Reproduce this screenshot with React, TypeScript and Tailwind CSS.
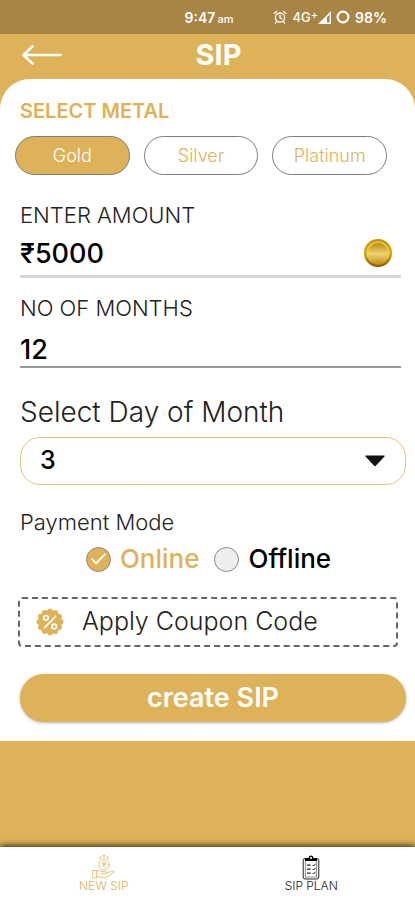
import React, { useState } from 'react';

const metals = ["Gold", "Silver", "Platinum"]
const modes = ["Online", "Offline"]

const StatusBar = () => {
    return (
        <div className="h-[34px] bg-[#A88445] text-white flex items-center justify-end gap-[40px] pr-[28px]">
            <p className="flex items-baseline gap-[2px] text-[14px] font-semibold">9:47<span className="text-[11px] font-medium">am</span></p>
            <div className="flex items-center gap-[5px]">
                <svg width="14" height="14" viewBox="0 0 14 14" fill="none" stroke="currentColor" strokeWidth="1.3" strokeLinecap="round">
                    <circle cx="7" cy="7.6" r="4.6" />
                    <path d="M1.2 3.4 3.6 1.4M12.8 3.4 10.4 1.4M7 5v2.8l1.8 1M3.6 11.6 2.6 13M10.4 11.6l1 1.4" />
                </svg>
                <div className="flex items-center">
                    <span className="flex items-start text-[13px] leading-[16px] font-medium">4G<span className="text-[11px] leading-[12px]">+</span></span>
                    <svg width="13" height="13" viewBox="0 0 13 13" fill="currentColor">
                        <path fillRule="evenodd" d="M13 0v13H0zM11.6 3.6 9 6.2v5.4h2.6z" />
                    </svg>
                </div>
                <svg width="14" height="14" viewBox="0 0 14 14" fill="none" stroke="currentColor" strokeWidth="2.2">
                    <circle cx="7" cy="7" r="5.4" />
                </svg>
                <span className="text-[14px] font-semibold">98%</span>
            </div>
        </div>
    )
}

const Coin = () => {
    return (
        <svg width="30" height="30" viewBox="0 0 30 30">
            <defs>
                <linearGradient id="coinRim" x1="0" y1="0" x2="0" y2="1">
                    <stop offset="0" stopColor="#C2940F" />
                    <stop offset="0.5" stopColor="#D3A51A" />
                    <stop offset="1" stopColor="#8A560A" />
                </linearGradient>
                <linearGradient id="coinRing" x1="0" y1="0" x2="0" y2="1">
                    <stop offset="0" stopColor="#E6C22A" />
                    <stop offset="0.6" stopColor="#EFD23C" />
                    <stop offset="1" stopColor="#C08C12" />
                </linearGradient>
                <linearGradient id="coinFace" x1="0" y1="0" x2="0" y2="1">
                    <stop offset="0" stopColor="#B98A10" />
                    <stop offset="0.55" stopColor="#EFD374" />
                    <stop offset="1" stopColor="#C9961A" />
                </linearGradient>
            </defs>
            <circle cx="15" cy="15" r="14" fill="url(#coinRim)" />
            <circle cx="15" cy="15" r="11.8" fill="url(#coinRing)" />
            <circle cx="15" cy="15" r="10" fill="url(#coinFace)" />
        </svg>
    )
}

const CouponBadge = () => {
    return (
        <svg width="28" height="28" viewBox="0 0 28 28">
            <g fill="#DEB258">
                <circle cx="14" cy="14" r="12" />
                <circle cx="14" cy="2.8" r="2.4" />
                <circle cx="19.6" cy="4.3" r="2.4" />
                <circle cx="23.7" cy="8.4" r="2.4" />
                <circle cx="25.2" cy="14" r="2.4" />
                <circle cx="23.7" cy="19.6" r="2.4" />
                <circle cx="19.6" cy="23.7" r="2.4" />
                <circle cx="14" cy="25.2" r="2.4" />
                <circle cx="8.4" cy="23.7" r="2.4" />
                <circle cx="4.3" cy="19.6" r="2.4" />
                <circle cx="2.8" cy="14" r="2.4" />
                <circle cx="4.3" cy="8.4" r="2.4" />
                <circle cx="8.4" cy="4.3" r="2.4" />
            </g>
            <g fill="none" stroke="#fff" strokeWidth="1.6" strokeLinecap="round">
                <path d="M19.6 8.4 8.6 19.6" />
                <circle cx="10" cy="9.8" r="2.3" />
                <circle cx="18.2" cy="18.4" r="2.3" />
            </g>
        </svg>
    )
}

const HandCoinIcon = () => {
    return (
        <svg width="24" height="26" viewBox="0 0 24 26" fill="none" stroke="currentColor" strokeWidth="0.8" strokeLinecap="round" strokeLinejoin="round">
            <circle cx="12" cy="11" r="5" />
            <path d="M10.6 8.8h3M10.6 10.2h3M11 8.8c2.4 0 2.4 2.6 0 2.6l2 2.2" />
            <path d="M12 1v4M10.8 2.2 12 1l1.2 1.2M8.4 3v2M7.6 3.8l.8-.8.8.8M15.6 3v2M14.8 3.8l.8-.8.8.8" />
            <path d="M1 16.5h3.4v7.5H1zM4.4 17.5c2-1.3 4-1 5.4.2h3.6c1.6 0 1.6 2 0 2H9.8M14.6 19.2l5.6-2.2c1.8-.5 2.4 1 1 1.9l-6.4 4.1c-1 .5-2 .6-3 .4l-7.4-.6" />
        </svg>
    )
}

const ClipboardIcon = () => {
    return (
        <svg width="18" height="26" viewBox="0 0 18 26" fill="none" stroke="currentColor">
            <rect x="1.2" y="4.5" width="15.6" height="20.5" rx="2" strokeWidth="1" />
            <rect x="3.2" y="6.5" width="11.6" height="16.5" strokeWidth="0.5" />
            <path d="M3 4h3.6a2.4 2.4 0 0 1 4.8 0H15v3H3z" fill="#000" stroke="none" />
            <circle cx="9" cy="4" r="1.1" fill="#fff" stroke="none" />
            <path d="M5 11.2h3.6M5 15.2h3.6M5 19.2h3.6" strokeWidth="1.3" />
            <path d="m10.6 11 1 1 1.8-2.2M10.6 15l1 1 1.8-2.2M10.6 19l1 1 1.8-2.2" strokeWidth="1" />
        </svg>
    )
}

const App = () => {
    const [metal, setMetal] = useState("Gold")
    const [mode, setMode] = useState("Online")

    return (
        <div className="min-h-screen flex flex-col bg-[#DEB258] font-['Inter',sans-serif] text-black">
            <StatusBar />
            <header className="h-[45px] grid grid-cols-[60px_1fr_38px] items-center px-[10px] pb-[4px] text-white">
                <button type="button" aria-label="Back" className="pl-[12px]">
                    <svg width="40" height="20" viewBox="0 0 40 20" fill="none" stroke="currentColor" strokeWidth="2.6" strokeLinecap="round" strokeLinejoin="round">
                        <path d="M10.5 1.5 1.5 10l9 8.5M2 10h36.5" />
                    </svg>
                </button>
                <h1 className="text-center text-[29px] leading-[32px] font-bold">SIP</h1>
            </header>

            <main className="bg-white rounded-t-[30px] pl-[20px] pr-[14px] pt-[20px] pb-[19px]">
                <h2 className="text-[#DEB258] text-[20px] leading-[24px] font-semibold">SELECT METAL</h2>
                <div className="flex gap-[14px] mt-[13px] -ml-[5px] mr-[14px]">
                    {metals.map((item) => (
                        <button
                            key={item}
                            type="button"
                            onClick={() => setMetal(item)}
                            className={`flex-1 h-[39px] rounded-full border border-[#7D7D7D] text-[18px] font-light ${metal === item ? "bg-[#DEB258] text-white" : "bg-white text-[#DEB258]"}`}
                        >
                            {item}
                        </button>
                    ))}
                </div>

                <div className="mt-[28px]">
                    <label htmlFor="amount" className="block text-[22px] leading-[24px] font-light text-[#222222]">ENTER AMOUNT</label>
                    <div className="flex items-end h-[51px] pb-[7px] border-b-[3px] border-[#D5D5D5] pr-[8px]">
                        <input id="amount" defaultValue="₹5000" className="flex-1 min-w-0 h-[28px] text-[27px] leading-[28px] font-medium outline-none" />
                        <Coin />
                    </div>
                </div>

                <div className="mt-[18px]">
                    <label htmlFor="months" className="block text-[22px] leading-[24px] font-light text-[#222222]">NO OF MONTHS</label>
                    <input id="months" defaultValue="12" className="block w-full h-[48px] pt-[12px] text-[27px] leading-[32px] font-medium border-b-2 border-[#9A9A9A] outline-none" />
                </div>

                <div className="mt-[28px] -mr-[5px]">
                    <label htmlFor="day" className="block text-[28px] leading-[32px] font-light text-[#222222]">Select Day of Month</label>
                    <div className="relative mt-[9px]">
                        <select id="day" defaultValue="3" className="appearance-none w-full h-[48px] rounded-[20px] border border-[#E4C27A] bg-white pl-[19px] text-[25px] font-medium outline-none">
                            <option>1</option>
                            <option>2</option>
                            <option>3</option>
                            <option>4</option>
                            <option>5</option>
                        </select>
                        <svg className="absolute right-[20px] top-[18px] pointer-events-none" width="22" height="12" viewBox="0 0 22 12" fill="#111">
                            <path d="M2 .5h18q1.4 0 .5 1l-8.7 9.3q-.8.9-1.6 0L1.500 1.500q-.9-1 .5-1z" />
                        </svg>
                    </div>
                </div>

                <fieldset className="mt-[25px]">
                    <legend className="text-[22px] leading-[24px] font-light text-[#222222]">Payment Mode</legend>
                    <div className="flex justify-center gap-[15px] mt-[9px] pr-[4px]">
                        {modes.map((item) => (
                            <label key={item} className={`relative flex items-center gap-[9px] text-[26px] leading-[32px] font-medium ${mode === item ? "text-[#DEB258]" : "text-black"}`}>
                                <input
                                    type="radio"
                                    name="mode"
                                    checked={mode === item}
                                    onChange={() => setMode(item)}
                                    className="appearance-none w-[25px] h-[25px] rounded-full border border-[#8A8A8A] bg-[#EEEEEE] checked:bg-[#DEB258]"
                                />
                                {mode === item && (
                                    <svg className="absolute left-[5px] top-[10px]" width="15" height="12" viewBox="0 0 15 12" fill="none" stroke="#fff" strokeWidth="1.8" strokeLinecap="round" strokeLinejoin="round">
                                        <path d="m1 6 4 4.5L14 1.2" />
                                    </svg>
                                )}
                                {item}
                            </label>
                        ))}
                    </div>
                </fieldset>

                <div className="mt-[22px] -ml-[2px] mr-[3px]">
                    <button type="button" className="flex items-center gap-[18px] w-full h-[50px] px-[16px] border-2 border-dashed border-[#666666] rounded-[4px] text-[25px] font-light text-[#222222]">
                        <CouponBadge />
                        Apply Coupon Code
                    </button>
                </div>
                <div className="mt-[27px] -mr-[5px]">
                    <button type="button" className="w-full h-[48px] rounded-full bg-[#DEB258] text-white text-[27px] font-semibold shadow-[0_1px_3px_rgba(0,0,0,0.3)]">create SIP</button>
                </div>
            </main>

            <nav className="mt-auto h-[53px] grid grid-cols-2 bg-white shadow-[0_-2px_6px_rgba(0,0,0,0.7)] text-[12px] leading-[12px] font-light">
                <a href="#new-sip" className="flex flex-col items-center pt-[7px] text-[#DEB258]">
                    <HandCoinIcon />
                    NEW SIP
                </a>
                <a href="#sip-plan" className="flex flex-col items-center pt-[7px] text-[#222222]">
                    <ClipboardIcon />
                    SIP PLAN
                </a>
            </nav>
        </div>
    )
}

export default App
